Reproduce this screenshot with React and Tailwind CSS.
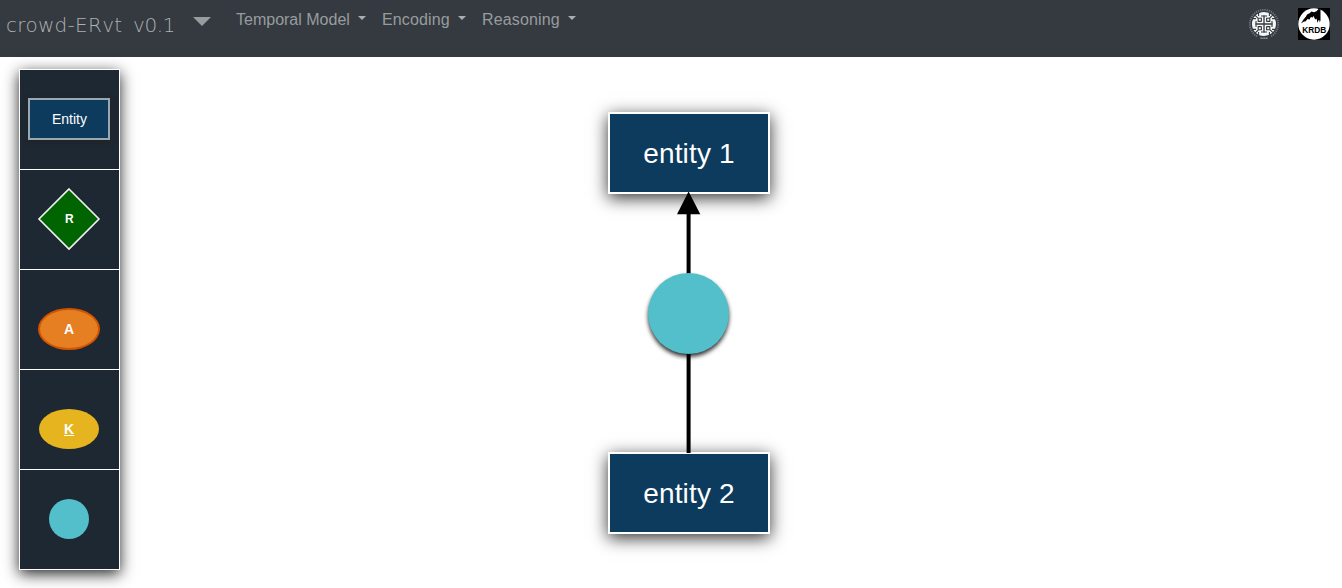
import React from "react";

const menus = [
  { name: "Temporal Model", width: "w-[130px]", tracking: "tracking-normal" },
  { name: "Encoding", width: "w-[84px]", tracking: "tracking-[0.15px]" },
  { name: "Reasoning", width: "w-[94px]", tracking: "tracking-[0.15px]" },
];

function UniversityLogo() {
  return (
    <svg width="32" height="32" viewBox="-16 -16 32 32" className="block">
      <path
        d="M-7 12.4A14.2 14.2 0 1 1 7 12.4"
        fill="none"
        stroke="#a3a8ad"
        strokeWidth="1.8"
        strokeDasharray="1.3 .9"
        opacity="0.55"
      />
      <circle r="12" fill="#f4f5f5" />
      <g fill="none" stroke="#343a40" strokeWidth="1.1">
        <path d="M0 -8.5V8.5M-8.5 0H8.5" strokeWidth="1.3" />
        {[0, 90, 180, 270].map((a) => (
          <g key={a} transform={`rotate(${a})`}>
            <path d="M-3 -8H3M2.6 -2.6V-5.8H5.3M2.6 -2.6H5.8V-5.3M5.3 -5.5L8.7 -8.9M5.4 -8V-11M8 -5.4H11" />
          </g>
        ))}
      </g>
      <path d="M-3.5 14.3H3.5" stroke="#a3a8ad" strokeWidth="1.5" strokeDasharray="1.2 .7" />
    </svg>
  );
}

function KrdbLogo() {
  return (
    <svg width="32" height="32" viewBox="0 0 32 32" className="block">
      <rect width="32" height="32" fill="#000" />
      <circle cx="16" cy="16" r="15.7" fill="#fff" />
      <path
        d="M3 15.5 5.5 11.5 8 8.5 9 6.5 11.5 5.3 13.5 3.5 16 4.2 18.5 3.2 20.5 1 22.5 1.5V13.5L21.6 11.8V14.5L20.4 11.8 19.6 15 18.5 10.5 17.2 11.5 15.5 8 14.3 9.8 13 8.8 11.5 11.4 9.5 11 7.5 13.6 6 13.4Z"
        fill="#000"
      />
      <text x="16.2" y="25.3" textAnchor="middle" textLength="24" lengthAdjust="spacingAndGlyphs" fontFamily="Liberation Sans, sans-serif" fontWeight="700" fontSize="9" fill="#000">
        KRDB
      </text>
    </svg>
  );
}

function Navbar() {
  return (
    <nav className="flex h-[57px] items-start bg-[#343a40] text-[#999c9f]">
      <div className="flex h-[50px] w-[187px] items-center pl-1.5 font-['DejaVu_Sans'] text-[20px] font-extralight whitespace-pre text-[#adb0b2]">
        <span className="w-[127px] tracking-[0.3px]">crowd-ERvt</span>
        <span className="tracking-[-0.4px]">v0.1</span>
      </div>
      <svg width="18" height="9" viewBox="0 0 18 9" className="mt-[17px] ml-1.5">
        <path d="M0 0H18L9 9Z" fill="#999c9f" />
      </svg>
      <ul className="ml-[25px] flex gap-4 pt-2 text-base leading-6">
        {menus.map((m) => (
          <li key={m.name} className={`flex justify-between ${m.width}`}>
            <span className={m.tracking}>{m.name}</span>
            <svg width="8" height="4" viewBox="0 0 8 4" className="mt-2">
              <path d="M0 0H8L4 4Z" fill="#aaadaf" />
            </svg>
          </li>
        ))}
      </ul>
      <div className="mt-2 mr-3 ml-auto flex gap-[18px]">
        <UniversityLogo />
        <KrdbLogo />
      </div>
    </nav>
  );
}

function Palette() {
  return (
    <aside className="mt-3 ml-[19px] flex h-[501px] w-[101px] shrink-0 flex-col divide-y divide-white border border-white bg-[#1e2832] text-white shadow-[0_4px_14px_rgba(0,0,0,0.85)]">
      <div className="flex h-[100px] items-start justify-center pt-7 pr-px">
        <div className="flex h-[42px] w-[82px] items-center justify-center border-2 border-[#9ca8b0] bg-[#0d3b5e] pl-px text-sm shadow-[0_2px_5px_rgba(34,34,34,0.8)]">
          Entity
        </div>
      </div>
      <div className="flex h-[100px] items-start justify-center pt-[17px] pr-px">
        <svg width="64" height="64" viewBox="-32 -32 64 64">
          <path d="M0 -30L30 0L0 30L-30 0Z" fill="#006400" stroke="#f2f4f2" strokeWidth="1.6" />
          <text x="0.3" y="4.3" textAnchor="middle" fontSize="12" fontWeight="700" fill="#fff">R</text>
        </svg>
      </div>
      <div className="flex h-[100px] items-end justify-center pr-px pb-[19px]">
        <div className="flex h-[42px] w-[62px] items-center justify-center rounded-[50%] border-2 border-[#d35400] bg-[#e67e22] text-sm font-bold">
          A
        </div>
      </div>
      <div className="flex h-[100px] items-end justify-center pr-px pb-5">
        <div className="flex h-10 w-[60px] items-center justify-center rounded-[50%] bg-[#e6b41e] text-sm font-bold underline">
          K
        </div>
      </div>
      <div className="flex h-[99px] items-start justify-center pt-[29px] pr-px">
        <div className="size-10 rounded-full bg-[#52bfcb]" />
      </div>
    </aside>
  );
}

function Entity({ label, className }) {
  return (
    <div
      className={`absolute left-[608px] flex h-[82px] w-[162px] items-center justify-center border-2 border-white bg-[#0d3b5e] pt-0.5 text-[28px] tracking-[0.15px] text-white shadow-[0_4px_16px_rgba(0,0,0,0.8)] ${className}`}
    >
      {label}
    </div>
  );
}

function Diagram() {
  return (
    <>
      <Entity label="entity 1" className="top-[112px]" />
      <Entity label="entity 2" className="top-[452px]" />
      <svg className="absolute top-[190px] left-[640px]" width="98" height="264" viewBox="640 190 98 264">
        <path d="M688.6 212V453" stroke="#000" strokeWidth="4" />
        <path d="M688.6 191.5L700.3 214.3H677Z" fill="#000" />
      </svg>
      <div className="absolute top-[273px] left-[648px] size-[81px] rounded-full bg-[#52bfcb] shadow-[0_3px_4px_rgba(0,0,0,0.8)]" />
    </>
  );
}

export default function App() {
  return (
    <div className="relative flex h-[588px] w-[1342px] flex-col overflow-hidden bg-white font-['Liberation_Sans',Arial,sans-serif]">
      <Navbar />
      <Palette />
      <Diagram />
    </div>
  );
}
